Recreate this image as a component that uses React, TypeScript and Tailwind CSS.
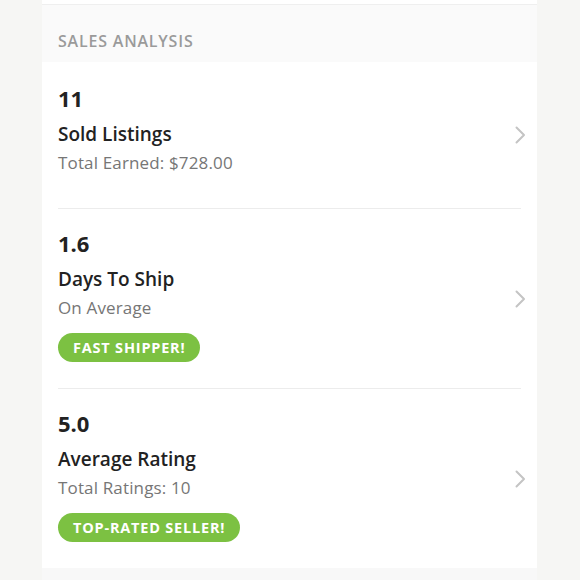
import React from "react";

interface StatItem {
  value: string;
  title: string;
  subtitle: string;
  badge?: string;
}

const items: StatItem[] = [
  { value: "11", title: "Sold Listings", subtitle: "Total Earned: $728.00" },
  { value: "1.6", title: "Days To Ship", subtitle: "On Average", badge: "Fast Shipper!" },
  { value: "5.0", title: "Average Rating", subtitle: "Total Ratings: 10", badge: "Top-Rated Seller!" },
];

function Chevron() {
  return (
    <svg width="14" height="18" viewBox="0 0 14 18" fill="none" className="shrink-0">
      <path d="M3.5 1.5l7.5 7.5-7.5 7.5" stroke="#c4c4c4" strokeWidth="2" strokeLinecap="round" strokeLinejoin="round" />
    </svg>
  );
}

function StatRow({ item, first }: { item: StatItem; first: boolean }) {
  return (
    <div className="flex items-center pl-[16px] pr-[10px]">
      <div className={`flex-1 ${first ? "pt-[22px] pb-[33px]" : "pt-[20px] pb-[26px]"}`}>
        <div className="text-[22px] leading-[28px] font-bold text-[#222]">{item.value}</div>
        <div className="mt-[9px] text-[19px] leading-[26px] font-semibold text-[#222]">{item.title}</div>
        <div className="mt-[4px] text-[17px] leading-[24px] tracking-[0.15px] text-[#767676]">{item.subtitle}</div>
        {item.badge && (
          <div className="mt-[13px] inline-flex h-[29px] items-center rounded-full bg-[#7cc142] px-[15px] text-[14.5px] font-bold uppercase tracking-[0.8px] text-white">
            {item.badge}
          </div>
        )}
      </div>
      <Chevron />
    </div>
  );
}

export default function App() {
  return (
    <div
      className="flex h-[580px] w-[580px] bg-[#f6f6f4]"
      style={{ fontFamily: '"Open Sans", "Liberation Sans", sans-serif' }}
    >
      <div className="ml-[42px] flex w-[495px] flex-col">
        <div className="h-[5px] border-b border-[#efefef] bg-white" />
        <div className="flex h-[57px] items-end bg-[#fafafa] pb-[9px] pl-[16px]">
          <span className="text-[16px] font-semibold uppercase tracking-[0.8px] text-[#9a9a9a]">Sales Analysis</span>
        </div>
        <div className="bg-white">
          {items.map((item, i) => (
            <div key={item.title}>
              {i > 0 && <div className="mx-[16px] h-px bg-[#ececec]" />}
              <StatRow item={item} first={i === 0} />
            </div>
          ))}
        </div>
        <div className="flex-1 bg-[#f8f8f8]" />
      </div>
    </div>
  );
}
